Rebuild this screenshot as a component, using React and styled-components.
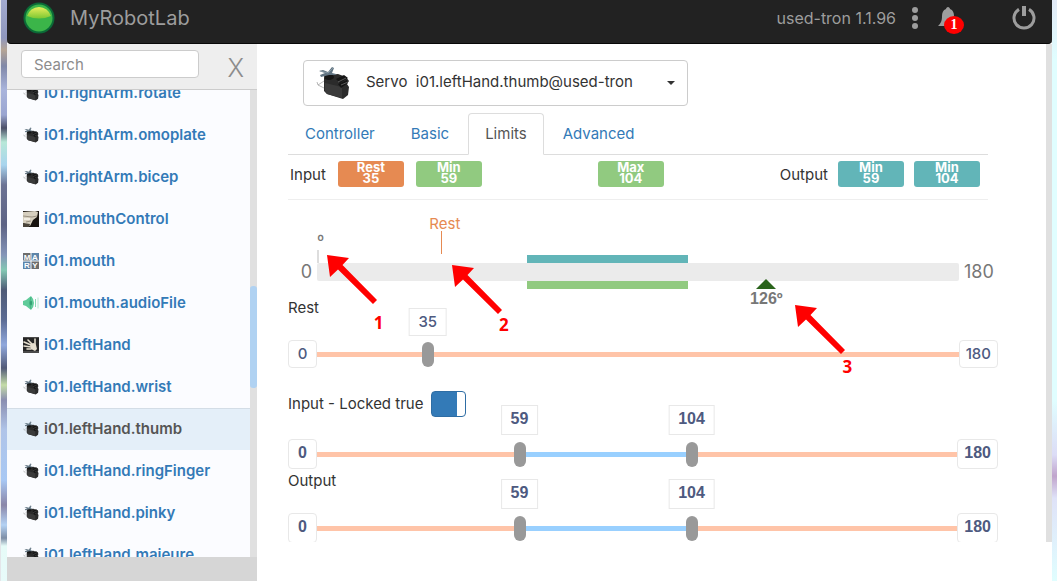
import React, { useLayoutEffect, useRef, useState } from 'react'
import styled, { createGlobalStyle } from 'styled-components'

const linkColor = '#337ab7'
const textColor = '#333'
const restColor = '#e68a52'
const inputColor = '#91ca80'
const outputColor = '#62b5b8'

const GlobalStyle = createGlobalStyle`
  * {
    box-sizing: border-box;
  }
  body {
    margin: 0;
    overflow: hidden;
    font-family: Inter, "Liberation Sans", sans-serif;
    font-size: 15px;
    line-height: 20px;
    color: ${textColor};
  }
  button, input, select {
    font: inherit;
  }
`

const Page = styled.div`
  display: flex;
  height: 100vh;
`
const LeftEdge = styled.div`
  flex: none;
  width: 7px;
  border-left: 1px solid #e4e6ea;
  background: linear-gradient(
    #a3abd0 0, #8f97bd 38px, #b5a596 50px, #8088a8 66px, #a9b4dc 90px, #9aa5d0 115px, #4c5068 128px,
    #b8e8d8 142px, #a8d4ee 165px, #6c7394 185px, #5d6384 225px, #8494b8 255px, #84c8b4 270px,
    #4e5a76 290px, #5c6c94 320px, #90a8dc 345px, #525a78 368px, #c4dca8 385px, #8a8eb0 400px,
    #b0c4e8 430px, #a8c8f4 480px, #8a86a8 505px, #b4d2f4 525px, #7e8ea6 538px, #e6fbf8 546px, #e8fbfa 581px
  );
`
const RightEdge = styled.div`
  flex: none;
  width: 5px;
  background: linear-gradient(
    #e2eaf6 0, #e0feff 60px, #e0feff 400px, #dcdcf6 455px, #c0a4cc 476px, #dfe2f8 498px, #e0feff 581px
  );
`
const Frame = styled.div`
  flex: 1;
  min-width: 0;
  display: flex;
  flex-direction: column;
  background: white;
`

const Navbar = styled.nav`
  flex: none;
  height: 44px;
  display: flex;
  align-items: center;
  padding: 0 16px 8px;
  background: #222;
  border-bottom: 1px solid #080808;
  border-radius: 0 0 4px 4px;
  color: #9d9d9d;
  font-size: 16px;
`
const Brand = styled.a`
  flex: 1;
  display: flex;
  align-items: center;
  gap: 15px;
  font-size: 20px;
  color: inherit;
  text-decoration: none;
`
const IconButton = styled.button`
  position: relative;
  display: flex;
  padding: 0;
  margin-left: ${props => props.$gap}px;
  border: none;
  background: none;
  color: inherit;
  cursor: pointer;
`
const AlertCount = styled.span`
  position: absolute;
  left: 6px;
  top: 9px;
  width: 20px;
  height: 18px;
  border-radius: 50%;
  background: #f00;
  color: white;
  font: bold 14px/18px "Liberation Serif", serif;
  text-align: center;
`

const Body = styled.div`
  flex: 1;
  min-height: 0;
  display: flex;
`
const Sidebar = styled.aside`
  flex: none;
  width: 250px;
  display: flex;
  flex-direction: column;
  background: #d6d6d6;
`
const SearchBar = styled.div`
  flex: none;
  display: flex;
  align-items: center;
  justify-content: space-between;
  height: 46px;
  padding: 0 13px 5px 14px;
  background: #eee;
  border-bottom: 1px solid #ccc;
`
const SearchInput = styled.input`
  width: 178px;
  height: 28px;
  padding: 0 12px;
  border: 1px solid #ccc;
  border-radius: 4px;
  background: white;
  &::placeholder {
    color: #8c8c8c;
  }
`
const CloseButton = styled.button`
  padding: 8px 0 0;
  border: none;
  background: none;
  color: #8c8c8c;
  font-size: 25px;
  font-weight: 300;
  cursor: pointer;
`
const ListPane = styled.div`
  flex: 1;
  min-height: 0;
  display: flex;
  margin-bottom: 24px;
  background: #fbfcff;
`
const ServiceList = styled.ul`
  flex: 1;
  min-width: 0;
  margin: 0;
  padding: 0;
  list-style: none;
  overflow: hidden;
`
const ServiceLink = styled.a`
  display: flex;
  align-items: center;
  gap: 5px;
  height: 42px;
  padding: 0 0 2px 16px;
  border-top: 1px solid ${props => (props.$active ? '#d3dde6' : 'transparent')};
  background: ${props => (props.$active ? '#e4eff9' : 'none')};
  color: ${props => (props.$active ? '#555' : linkColor)};
  font-weight: 600;
  text-decoration: none;
`
const Scrollbar = styled.div`
  flex: none;
  width: ${props => props.$width}px;
  padding-top: ${props => props.$offset || 0}px;
  background: #e0e0e0;
`
const ScrollThumb = styled.div`
  height: 102px;
  border-radius: 3px;
  background: #b0d2f2;
`

const Main = styled.main`
  flex: 1;
  min-width: 0;
  display: flex;
  padding-bottom: 39px;
`
const Content = styled.div`
  flex: 1;
  min-width: 0;
  padding: 16px 58px 0 31px;
  overflow: hidden;
`
const ServicePicker = styled.label`
  display: flex;
  align-items: center;
  width: 385px;
  height: 46px;
  margin-left: 15px;
  padding: 0 12px;
  border: 1px solid #ccc;
  border-radius: 4px;
  cursor: pointer;
`
const ServiceSelect = styled.select`
  flex: 1;
  margin: 0 12px 2px 16px;
  padding: 0;
  border: none;
  outline: none;
  background: none;
  color: ${textColor};
  appearance: none;
`
const Caret = styled.span`
  border-top: 4px solid ${textColor};
  border-left: 4px solid transparent;
  border-right: 4px solid transparent;
  pointer-events: none;
`

const Tabs = styled.div`
  display: flex;
  gap: 2px;
  margin-top: 7px;
  border-bottom: 1px solid #ddd;
`
const Tab = styled.button`
  height: 42px;
  margin-bottom: -1px;
  padding: 0 16px;
  border: 1px solid ${props => (props.$active ? '#ddd' : 'transparent')};
  border-bottom-color: ${props => (props.$active ? 'white' : 'transparent')};
  border-radius: 4px 4px 0 0;
  background: ${props => (props.$active ? 'white' : 'none')};
  color: ${props => (props.$active ? '#555' : linkColor)};
  cursor: pointer;
`

const Summary = styled.div`
  display: flex;
  justify-content: space-between;
  height: 45px;
  padding: 6px 8px 0 2px;
  border-bottom: 1px solid #eee;
`
const SummaryGroup = styled.div`
  display: flex;
  gap: ${props => props.$gap}px;
  line-height: 28px;
`
const Badge = styled.span`
  width: 66px;
  height: 26px;
  padding-top: 1px;
  border-radius: 3px;
  background: ${props => props.$color};
  color: white;
  font-size: 13px;
  line-height: 11px;
  font-weight: 700;
  text-align: center;
`
const BadgeValue = styled.span`
  display: block;
`

const Gauge = styled.div`
  display: flex;
  align-items: center;
  margin-right: -10px;
  padding: 63px 0 17px;
`
const GaugeEnd = styled.span`
  flex: none;
  width: ${props => props.$width}px;
  height: 18px;
  padding: 0 5px;
  color: #777;
  font-size: 18px;
  line-height: 18px;
  text-align: ${props => props.$align};
`
const GaugeBar = styled.div`
  position: relative;
  flex: 1;
  height: 18px;
  border-radius: 2px;
  background: #ebebeb;
`
const GaugeRange = styled.div`
  position: absolute;
  height: 8px;
  ${props => (props.$above ? 'bottom: 100%;' : 'top: 100%;')}
  background: ${props => props.$color};
`
const RestMark = styled.div`
  position: absolute;
  bottom: 27px;
  display: flex;
  flex-direction: column;
  align-items: center;
  width: 40px;
  margin-left: -17px;
  color: ${restColor};
  line-height: 16px;
  &::after {
    content: '';
    width: 1px;
    height: 23px;
    margin: -1px 6px 0 0;
    background: ${restColor};
  }
`
const InputMark = styled.div`
  position: absolute;
  left: 0;
  bottom: 100%;
  color: #777;
  font-size: 16px;
  line-height: 20px;
  &::after {
    content: '';
    display: block;
    width: 2px;
    height: 13px;
    background: #ddd;
  }
`
const PositionMark = styled.div`
  position: absolute;
  top: 16px;
  display: flex;
  flex-direction: column;
  align-items: center;
  width: 60px;
  margin-left: -30px;
  color: #777;
  font: bold 16px/19px "Liberation Sans", sans-serif;
  &::before {
    content: '';
    border-bottom: 10px solid #2a641c;
    border-left: 10px solid transparent;
    border-right: 10px solid transparent;
  }
`
const Callout = styled.div`
  position: absolute;
  left: ${props => props.$left}%;
  top: ${props => props.$top}px;
  z-index: 2;
  display: flex;
  flex-direction: column;
  align-items: flex-end;
  width: 62px;
  pointer-events: none;
`
const CalloutNumber = styled.span`
  width: 20px;
  margin-top: ${props => props.$gap}px;
  color: #f00;
  font: bold 17px/20px "Noto Sans", sans-serif;
  text-align: center;
`

const SliderLabel = styled.div`
  display: flex;
  align-items: center;
  gap: 8px;
  height: ${props => props.$height || 20}px;
  margin-bottom: 22px;
`
const SwitchInput = styled.input`
  appearance: none;
  width: 35px;
  height: 26px;
  margin: 0;
  border: 1px solid #2e6da4;
  border-radius: 4px;
  background: linear-gradient(to left, white 8px, ${linkColor} 8px);
  cursor: pointer;
  &:not(:checked) {
    background: linear-gradient(to right, white 8px, #e6e6e6 8px);
  }
`
const Track = styled.div`
  position: relative;
  display: flex;
  align-items: center;
  height: ${props => (props.$bold ? 30 : 28)}px;
  margin: 0 -10px ${props => props.$after}px 0;
  color: #4e5a80;
  font-weight: 500;
  ${props => props.$bold && 'font: bold 16px/20px "Liberation Sans", sans-serif;'}
`
const EndBox = styled.span`
  flex: none;
  min-width: 29px;
  height: 100%;
  padding: 3px 6px;
  border: 1px solid #e8e8e8;
  border-radius: 4px;
  text-align: center;
`
const Line = styled.div`
  flex: 1;
  height: 5px;
  background: #ffc4a8;
`
// covers the same span as the thumbs travel, the end boxes included
const Overlay = styled.div`
  position: absolute;
  top: 0;
  bottom: 0;
  left: 0;
  right: 10px;
`
const Travel = styled.div`
  position: absolute;
  top: 0;
  bottom: 0;
  left: 6px;
  right: 6px;
`
const Selected = styled.div`
  position: absolute;
  top: calc(50% - 2px);
  height: 5px;
  background: #99d0ff;
`
const Bubble = styled.output`
  position: absolute;
  bottom: calc(100% + 4px);
  height: 100%;
  transform: translateX(-50%);
  padding: 3px 9px;
  border: 1px solid #e8e8e8;
  background: white;
`
const Range = styled.input`
  position: absolute;
  inset: 0;
  width: 100%;
  height: 100%;
  margin: 0;
  appearance: none;
  background: none;
  pointer-events: none;
  &::-webkit-slider-thumb {
    appearance: none;
    width: 12px;
    height: 25px;
    border-radius: 6px;
    background: #999;
    pointer-events: auto;
    cursor: pointer;
  }
`

const ServoIcon = ({ size }) => (
  <svg width={size} height={size} viewBox="0 0 34 34" aria-hidden="true">
    <path d="M8 15 L2 19 L1 16 M2 19 L8 22" fill="none" stroke="#999" strokeWidth="0.7" />
    <path d="M8 12 L13 9 L22 8 L30 11 L33 15 L31 18 L33 21 L32 29 L27 33 L11 28 L8 25 Z" fill="#2b2b2b" />
    <path d="M9 17 L26 21 L26 32 L11 28 L9 25 Z" fill="#3a3a3a" />
    <path d="M20 13 L28 9 L32 12 L24 17 Z M22 18 L31 14 L32 17 L25 22 Z" fill="#151515" />
    <path d="M22 16 L30 12 M25 19 L32 16" stroke="#888" strokeWidth="0.6" />
    <ellipse cx="13" cy="11" rx="5" ry="3" fill="#151515" />
    <path d="M3 5 L7 4 L12 6 L16 1 L18 2 L16 7 L20 8 L19 9 L13 9 L5 11 L4 9 L9 7 Z" fill="#607381" />
    <path d="M4 5 L12 7 L17 2" fill="none" stroke="#93a5b0" strokeWidth="0.7" />
  </svg>
)

const JawIcon = () => (
  <svg width="16" height="16" viewBox="0 0 16 16" aria-hidden="true">
    <path d="M0 0h16v16H0z" fill="#17130f" />
    <path d="M0 1 L12 0 L15 1 L14 6 L10 9 L7 15 L0 12 Z" fill="#d6cfbf" />
    <path d="M0 5 L9 6 L14 5 M3 11 L8 10" fill="none" stroke="#8a8272" strokeWidth="0.8" />
    <path d="M0 12 L7 13 L6 16 H0 Z" fill="#4a443a" />
    <path d="M1 7h6v2H1z" fill="#f0ece2" />
  </svg>
)

const MaryIcon = () => (
  <svg width="16" height="16" viewBox="0 0 16 16" aria-hidden="true">
    <path d="M0 0h7.5v7.5H0z M8.5 8.5h7.5v7.5H8.5z" fill="#6d6d6d" />
    <path d="M8.5 0h7.5v7.5H8.5z M0 8.5h7.5v7.5H0z" fill="#5e84a8" />
    <g fill="white" fontFamily="Liberation Sans, sans-serif" fontWeight="bold" fontSize="8" textAnchor="middle">
      <text x="4" y="7">M</text>
      <text x="12" y="7">A</text>
      <text x="4" y="15">R</text>
      <text x="12" y="15">Y</text>
    </g>
  </svg>
)

const AudioIcon = () => (
  <svg width="16" height="16" viewBox="0 0 16 16" aria-hidden="true">
    <path d="M0 6 L3 5 L8 1 Q11 4 11 8 Q11 12 8 15 L3 11 L0 10 Z" fill="#5fcb9a" />
    <path d="M8 2 Q5 8 8 14" fill="none" stroke="#38a878" strokeWidth="0.7" />
    <ellipse cx="8" cy="8" rx="1" ry="2.5" fill="#2f9e70" />
    <path d="M12.5 4v8" stroke="#8bdab6" />
    <path d="M15 2.5v11" stroke="#b4e6d0" />
  </svg>
)

const HandIcon = () => (
  <svg width="16" height="16" viewBox="0 0 16 16" aria-hidden="true">
    <path d="M0 0h16v16H0z" fill="#4a4a4a" />
    <path d="M0 1h16v13H0z" fill="#262626" />
    <path d="M7 7 L11 6 L13 8 L14 12 L12 14 L8 12 Z" fill="#e6dfcf" />
    <path
      d="M8 12 L4 12 M8 10 L1 9 M8 8 L1 5 M9 7 L5 3 M12 8 L12 2"
      stroke="#e6dfcf"
      strokeWidth="1.6"
      strokeLinecap="round"
    />
  </svg>
)

const icons = {
  servo: () => <ServoIcon size={16} />,
  jaw: JawIcon,
  mary: MaryIcon,
  audio: AudioIcon,
  hand: HandIcon
}

const services = [
  { name: 'i01.rightArm.rotate', icon: 'servo' },
  { name: 'i01.rightArm.omoplate', icon: 'servo' },
  { name: 'i01.rightArm.bicep', icon: 'servo' },
  { name: 'i01.mouthControl', icon: 'jaw' },
  { name: 'i01.mouth', icon: 'mary' },
  { name: 'i01.mouth.audioFile', icon: 'audio' },
  { name: 'i01.leftHand', icon: 'hand' },
  { name: 'i01.leftHand.wrist', icon: 'servo' },
  { name: 'i01.leftHand.thumb', icon: 'servo' },
  { name: 'i01.leftHand.ringFinger', icon: 'servo' },
  { name: 'i01.leftHand.pinky', icon: 'servo' },
  { name: 'i01.leftHand.majeure', icon: 'servo' }
]

const percent = value => `${(value / 180) * 100}%`

const StatusLight = () => (
  <svg width="32" height="32" viewBox="0 0 32 32" aria-hidden="true">
    <defs>
      <linearGradient id="glass" x1="0" y1="0" x2="0" y2="1">
        <stop offset="0" stopColor="#e8ee5c" />
        <stop offset="1" stopColor="#7cc832" />
      </linearGradient>
    </defs>
    <circle cx="16" cy="16" r="15.5" fill="#0b6a37" />
    <circle cx="16" cy="16" r="13.5" fill="#3bb549" />
    <path d="M4 14 A12.5 12.5 0 0 1 28 14 Q16 19 4 14 Z" fill="url(#glass)" />
  </svg>
)

const Header = () => (
  <Navbar>
    <Brand href="#">
      <StatusLight />
      MyRobotLab
    </Brand>
    <span>used-tron 1.1.96</span>
    <IconButton $gap={16} aria-label="Menu">
      <svg width="6" height="24" viewBox="0 0 6 24" fill="currentColor">
        <circle cx="3" cy="4" r="3" />
        <circle cx="3" cy="12" r="3" />
        <circle cx="3" cy="20" r="3" />
      </svg>
    </IconButton>
    <IconButton $gap={20} aria-label="Notifications">
      <svg width="20" height="22" viewBox="0 0 20 22" fill="currentColor">
        <path d="M10 0 C11 0 12 1 12 2 C15 3 16 6 16 9 C16 14 17 16 20 19 H0 C3 16 4 14 4 9 C4 6 5 3 8 2 C8 1 9 0 10 0 Z" />
        <path d="M8 20h4a2 2 0 0 1-4 0z" />
      </svg>
      <AlertCount>1</AlertCount>
    </IconButton>
    <IconButton $gap={54} aria-label="Power">
      <svg width="24" height="24" viewBox="0 0 24 24" fill="none" stroke="currentColor">
        <path d="M7 3.4 A10 10 0 1 0 17 3.4" strokeWidth="3" />
        <path d="M12 0v10" strokeWidth="4" />
      </svg>
    </IconButton>
  </Navbar>
)

const ServicesPanel = ({ active }) => {
  const list = useRef(null)
  useLayoutEffect(() => {
    list.current.scrollTop = 18
  }, [])
  return (
    <Sidebar>
      <SearchBar>
        <SearchInput type="text" placeholder="Search" aria-label="Search" />
        <CloseButton aria-label="Close">X</CloseButton>
      </SearchBar>
      <ListPane>
        <ServiceList ref={list}>
          {services.map(({ name, icon }) => {
            const Icon = icons[icon]
            return (
              <li key={name}>
                <ServiceLink href="#" $active={name === active}>
                  <Icon />
                  {name}
                </ServiceLink>
              </li>
            )
          })}
        </ServiceList>
        <Scrollbar $width={7} $offset={196}>
          <ScrollThumb />
        </Scrollbar>
      </ListPane>
    </Sidebar>
  )
}

const ValueBadge = ({ color, label, value }) => (
  <Badge $color={color}>
    {label}
    <BadgeValue>{value}</BadgeValue>
  </Badge>
)

const NumberedArrow = ({ left, top, gap, number }) => (
  <Callout $left={left} $top={top}>
    <svg width="62" height="50" viewBox="0 0 62 50">
      <path d="M0 0 L22 3 L15.5 10 L50 45 L46 49 L11 14.5 L3 22 Z" fill="#f00" />
    </svg>
    <CalloutNumber $gap={gap}>{number}</CalloutNumber>
  </Callout>
)

const Slider = ({ label, values, onChange, bold, after = 0 }) => (
  <Track $bold={bold} $after={after}>
    <EndBox>0</EndBox>
    <Line />
    <EndBox>180</EndBox>
    <Overlay>
      <Travel>
        {values.length > 1 && (
          <Selected style={{ left: percent(values[0]), width: percent(values[1] - values[0]) }} />
        )}
        {values.map((value, i) => (
          <Bubble key={i} style={{ left: percent(value) }}>{value}</Bubble>
        ))}
      </Travel>
      {values.map((value, i) => (
        <Range
          key={i}
          type="range"
          min="0"
          max="180"
          aria-label={values.length > 1 ? `${label} ${i ? 'max' : 'min'}` : label}
          value={value}
          onChange={e => onChange(values.map((v, j) => (j === i ? Number(e.target.value) : v)))}
        />
      ))}
    </Overlay>
  </Track>
)

const App = () => {
  const [tab, setTab] = useState('Limits')
  const [rest, setRest] = useState([35])
  const [input, setInput] = useState([59, 104])
  const [output, setOutput] = useState([59, 104])
  const [locked, setLocked] = useState(true)

  return (
    <Page>
      <GlobalStyle />
      <LeftEdge />
      <Frame>
        <Header />
        <Body>
          <ServicesPanel active="i01.leftHand.thumb" />
          <Main>
            <Content>
              <ServicePicker>
                <ServoIcon size={34} />
                <ServiceSelect aria-label="Service">
                  <option>{'Servo\u00a0 i01.leftHand.thumb@used-tron'}</option>
                </ServiceSelect>
                <Caret />
              </ServicePicker>
              <Tabs role="tablist">
                {['Controller', 'Basic', 'Limits', 'Advanced'].map(name => (
                  <Tab
                    key={name}
                    role="tab"
                    aria-selected={tab === name}
                    $active={tab === name}
                    onClick={() => setTab(name)}
                  >
                    {name}
                  </Tab>
                ))}
              </Tabs>
              <Summary>
                <SummaryGroup $gap={12}>
                  Input
                  <ValueBadge color={restColor} label="Rest" value={rest[0]} />
                  <ValueBadge color={inputColor} label="Min" value={input[0]} />
                </SummaryGroup>
                <ValueBadge color={inputColor} label="Max" value={input[1]} />
                <SummaryGroup $gap={10}>
                  Output
                  <ValueBadge color={outputColor} label="Min" value={output[0]} />
                  <ValueBadge color={outputColor} label="Min" value={output[1]} />
                </SummaryGroup>
              </Summary>
              <Gauge>
                <GaugeEnd $width={29} $align="right">0</GaugeEnd>
                <GaugeBar>
                  <InputMark>º</InputMark>
                  <RestMark style={{ left: percent(rest[0]) }}>Rest</RestMark>
                  <GaugeRange
                    $above
                    $color={outputColor}
                    style={{ left: percent(output[0]), width: percent(output[1] - output[0]) }}
                  />
                  <GaugeRange
                    $color={inputColor}
                    style={{ left: percent(input[0]), width: percent(input[1] - input[0]) }}
                  />
                  <PositionMark style={{ left: percent(126) }}>126º</PositionMark>
                  <NumberedArrow left={1.5} top={-8} gap={8} number={1} />
                  <NumberedArrow left={21} top={2} gap={0} number={2} />
                  <NumberedArrow left={74.5} top={42} gap={2} number={3} />
                </GaugeBar>
                <GaugeEnd $width={39} $align="left">180</GaugeEnd>
              </Gauge>
              <SliderLabel>Rest</SliderLabel>
              <Slider label="Rest" values={rest} onChange={setRest} after={23} />
              <SliderLabel as="label" $height={26}>
                Input - Locked {String(locked)}
                <SwitchInput type="checkbox" checked={locked} onChange={e => setLocked(e.target.checked)} />
              </SliderLabel>
              <Slider label="Input" values={input} onChange={setInput} bold after={2} />
              <SliderLabel>Output</SliderLabel>
              <Slider label="Output" values={output} onChange={setOutput} bold />
            </Content>
            <Scrollbar $width={6} />
          </Main>
        </Body>
      </Frame>
      <RightEdge />
    </Page>
  )
}

export default App
